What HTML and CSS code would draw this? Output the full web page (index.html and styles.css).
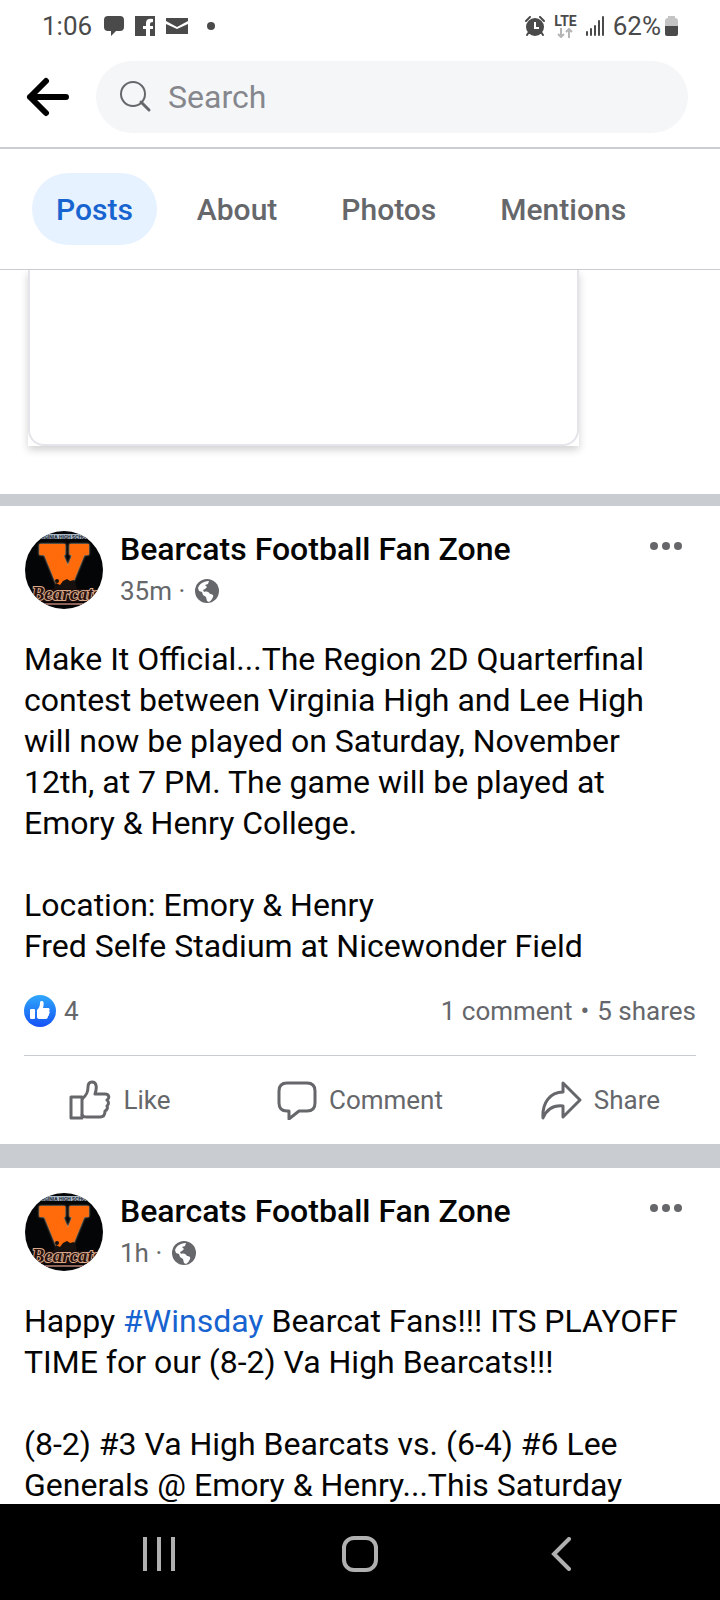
FILE: index.html
```
<!DOCTYPE html>
<html lang="en">
<head>
    <meta charset="UTF-8">
    <meta name="viewport" content="width=device-width, initial-scale=1.0">
    <title>Bearcats Football Fan Zone</title>
    <link rel="stylesheet" href="styles.css">
</head>
<body>
    <svg class="defs" width="0" height="0" aria-hidden="true">
        <defs>
            <clipPath id="round"><circle cx="40" cy="40" r="39"/></clipPath>
            <linearGradient id="blue" x1="0" y1="0" x2="0" y2="1">
                <stop offset="0" stop-color="#2fa8fb"/>
                <stop offset="1" stop-color="#1551f5"/>
            </linearGradient>
            <symbol id="avatar" viewBox="0 0 80 80">
                <g clip-path="url(#round)">
                    <rect width="80" height="80" fill="#040506"/>
                    <rect x="14" y="4" width="52" height="5" fill="#a9b8c6"/>
                    <text x="40" y="9" class="logo-top">VIRGINIA HIGH SCHOOL</text>
                    <text x="40" y="56" class="logo-v">V</text>
                    <path d="M29 59l3-6 4 2 3-4 4-2 3 2 4-1 2 4 1 5z" fill="#16100e"/>
                    <circle cx="33" cy="51" r="2" fill="#16100e"/>
                    <rect x="8" y="59" width="64" height="13" fill="#180b09"/>
                    <text x="42" y="70" class="logo-name">Bearcats</text>
                    <path d="M10 74h60" stroke="#8d6259" stroke-width="2"/>
                </g>
            </symbol>
            <symbol id="globe" viewBox="0 0 24 24">
                <circle cx="12" cy="12" r="12" fill="#65676b"/>
                <path d="M3 9c1-3 3-5 6-6 2-1 4-1 5-1l-1 3-3 1 2 2-2 2-2 1 1 2c3-1 5 0 6 2 2 0 4 1 3 3-1 2-2 4-4 5l-2-1-1-4-3-2-1-3-3-1z" fill="#fff"/>
            </symbol>
            <symbol id="dots" viewBox="0 0 32 10">
                <g fill="#65676b"><circle cx="4" cy="5" r="4"/><circle cx="16" cy="5" r="4"/><circle cx="28" cy="5" r="4"/></g>
            </symbol>
        </defs>
    </svg>

    <div class="status">
        <div class="status-left">
            <span class="clock">1:06</span>
            <svg width="20" height="20" viewBox="0 0 20 20"><path d="M4 0h12q4 0 4 4v7q0 4-4 4h-4l-5 5v-5H4q-4 0-4-4V4q0-4 4-4z"/></svg>
            <svg width="20" height="20" viewBox="0 0 20 20"><path d="M0 0h20v20h-5v-7h3v-3h-3V8q0-2 3-2V3q-7-1-7 4v3H8v3h3v7H0z"/></svg>
            <svg width="22" height="18" viewBox="0 0 22 18"><path d="M0 1h22v3l-11 6L0 4zM0 7l11 5 11-5v10H0z"/></svg>
            <span class="notice"></span>
        </div>
        <div class="status-right">
            <svg width="20" height="20" viewBox="0 0 20 20">
                <path d="M1 5l4-4M19 5l-4-4M4 16l-2 3M16 16l2 3" fill="none" stroke="#4a4a4a" stroke-width="2" stroke-linecap="round"/>
                <circle cx="10" cy="11" r="9"/>
                <path d="M10 6v6h4" fill="none" stroke="#fff" stroke-width="2"/>
            </svg>
            <div class="lte">
                <span>LTE</span>
                <svg width="16" height="10" viewBox="0 0 16 10"><path d="M4 0v9M1 6l3 3 3-3M12 10V1M9 4l3-3 3 3" fill="none" stroke="#b5b5b5" stroke-width="2"/></svg>
            </div>
            <svg width="18" height="20" viewBox="0 0 18 20"><path d="M1 19v-3M5 19v-6M9 19v-9M13 19V5M17 19V1" stroke="#4a4a4a" stroke-width="2" stroke-linecap="round"/></svg>
            <div class="battery">
                <span>62%</span>
                <svg width="14" height="22" viewBox="0 0 14 22"><path d="M3 3V1h7v2q3 0 3 3v5H0V6q0-3 3-3z" fill="#c4c4c4"/><path d="M0 11h13v8q0 2-2 2H2q-2 0-2-2z"/></svg>
            </div>
        </div>
    </div>

    <header class="topbar">
        <button class="back" aria-label="Back">
            <svg width="44" height="40" viewBox="0 0 44 40"><path d="M20 4L4 20l16 16M4 20h36" fill="none" stroke="#000" stroke-width="6" stroke-linecap="round" stroke-linejoin="round"/></svg>
        </button>
        <label class="search">
            <svg width="32" height="32" viewBox="0 0 32 32"><g fill="none" stroke="#65676b"><circle cx="13" cy="13" r="12" stroke-width="2"/><path d="M21 21l8 8" stroke-width="3" stroke-linecap="round"/></g></svg>
            <input type="text" placeholder="Search" aria-label="Search">
        </label>
    </header>

    <nav class="tabs">
        <a href="#" class="tab active">Posts</a>
        <a href="#" class="tab">About</a>
        <a href="#" class="tab">Photos</a>
        <a href="#" class="tab">Mentions</a>
    </nav>

    <main class="feed">
        <section class="previous">
            <div class="preview"><div class="preview-card"></div></div>
        </section>

        <article class="post">
            <div class="post-head">
                <svg class="avatar" width="80" height="80"><use href="#avatar"/></svg>
                <div class="post-info">
                    <h2>Bearcats Football Fan Zone</h2>
                    <div class="meta"><span>35m ·</span><svg width="24" height="24"><use href="#globe"/></svg></div>
                </div>
                <button class="more" aria-label="More"><svg width="32" height="10"><use href="#dots"/></svg></button>
            </div>
            <p>Make It Official...The Region 2D Quarterfinal contest between Virginia High and Lee High will now be played on Saturday, November 12th, at 7 PM. The game will be played at Emory &amp; Henry College.</p>
            <p>Location: Emory &amp; Henry<br>Fred Selfe Stadium at Nicewonder Field</p>
            <div class="counts">
                <svg width="32" height="32" viewBox="0 0 32 32">
                    <circle cx="16" cy="16" r="16" fill="url(#blue)"/>
                    <rect x="6" y="14" width="5" height="10" rx="1" fill="#fff"/>
                    <path d="M13 15c2-2 3-4 3-7 0-2 1-2 2-2 2 0 2 3 1 7h5c2 0 2 2 1 3 1 1 1 2 0 3 0 1 0 2-1 2 0 2-1 3-2 3h-7c-1 0-2-1-2-2z" fill="#fff"/>
                </svg>
                <span>4</span>
                <div class="shares"><span>1 comment</span><span>•</span><span>5 shares</span></div>
            </div>
            <div class="actions">
                <button>
                    <svg width="42" height="40" viewBox="0 0 42 40"><g fill="none" stroke="#65676b" stroke-width="3" stroke-linejoin="round"><path d="M2 17h11v21H2z"/><path d="M13 19c5-4 6-7 6-12 0-3 1-5 4-5 5 0 5 6 3 12h10c4 0 5 4 2 6 2 2 2 4 0 6 1 2 0 4-2 5 0 4-2 6-5 6H18c-3 0-5-1-5-3"/></g></svg>
                    Like
                </button>
                <button>
                    <svg width="40" height="40" viewBox="0 0 40 40"><path d="M10 3h20q8 0 8 8v12q0 8-8 8h-8l-10 8v-8h-2q-8 0-8-8V11q0-8 8-8z" fill="none" stroke="#65676b" stroke-width="3" stroke-linejoin="round"/></svg>
                    Comment
                </button>
                <button>
                    <svg width="42" height="40" viewBox="0 0 42 40"><path d="M23 3l17 17-17 17V26C14 25 7 29 3 38 2 23 10 12 23 12z" fill="none" stroke="#65676b" stroke-width="3" stroke-linejoin="round"/></svg>
                    Share
                </button>
            </div>
        </article>

        <article class="post">
            <div class="post-head">
                <svg class="avatar" width="80" height="80"><use href="#avatar"/></svg>
                <div class="post-info">
                    <h2>Bearcats Football Fan Zone</h2>
                    <div class="meta"><span>1h ·</span><svg width="24" height="24"><use href="#globe"/></svg></div>
                </div>
                <button class="more" aria-label="More"><svg width="32" height="10"><use href="#dots"/></svg></button>
            </div>
            <p>Happy <a href="#">#Winsday</a> Bearcat Fans!!! ITS PLAYOFF TIME for our (8-2) Va High Bearcats!!!</p>
            <p>(8-2) #3 Va High Bearcats vs. (6-4) #6 Lee Generals @ Emory &amp; Henry...This Saturday</p>
        </article>
    </main>

    <footer class="navbar">
        <button aria-label="Recent apps"><svg width="32" height="34" viewBox="0 0 32 34"><path d="M2 0v34M16 0v34M30 0v34" stroke="#b0b0b0" stroke-width="4"/></svg></button>
        <button aria-label="Home"><svg width="36" height="36" viewBox="0 0 36 36"><rect x="2" y="2" width="32" height="32" rx="10" fill="none" stroke="#b0b0b0" stroke-width="4"/></svg></button>
        <button aria-label="Back"><svg width="20" height="34" viewBox="0 0 20 34"><path d="M18 2L3 17l15 15" fill="none" stroke="#b0b0b0" stroke-width="4" stroke-linecap="round"/></svg></button>
    </footer>
</body>
</html>
```
FILE: styles.css
```
* {
    box-sizing: border-box;
}

body {
    display: flex;
    flex-direction: column;
    height: 100vh;
    margin: 0;
    font-family: Roboto, sans-serif;
    color: #050505;
    background-color: #fff;
}

svg {
    display: block;
    flex-shrink: 0;
}

button {
    padding: 0;
    border: 0;
    background: none;
    font-family: inherit;
    cursor: pointer;
}

a {
    color: #1763cf;
    text-decoration: none;
}

.defs {
    position: absolute;
}

/* status bar */
.status {
    display: flex;
    flex-shrink: 0;
    justify-content: space-between;
    height: 61px;
    padding: 0 41px 9px 42px;
    font-size: 26px;
    color: #4a4a4a;
    fill: #4a4a4a;
}

.status-left,
.status-right {
    display: flex;
    align-items: center;
    gap: 11px;
}

.status-right {
    gap: 9px;
}

.clock {
    width: 51px;
}

.notice {
    width: 8px;
    height: 8px;
    margin-left: 8px;
    border-radius: 50%;
    background-color: #4a4a4a;
}

.lte {
    display: flex;
    flex-direction: column;
    align-items: center;
    font-size: 14px;
    line-height: 14px;
    font-weight: 700;
}

.battery {
    display: flex;
    align-items: center;
    gap: 4px;
}

/* search */
.topbar {
    display: flex;
    flex-shrink: 0;
    align-items: center;
    gap: 26px;
    padding: 0 32px 14px 26px;
    border-bottom: 2px solid #c9ccd1;
}

.search {
    display: flex;
    flex: 1;
    align-items: center;
    gap: 16px;
    height: 72px;
    padding: 0 24px;
    border-radius: 36px;
    background-color: #f5f6f8;
}

.search input {
    flex: 1;
    min-width: 0;
    padding: 0;
    border: 0;
    outline: none;
    background: none;
    font-family: inherit;
    font-size: 32px;
}

.search input::placeholder {
    color: #85878c;
}

/* tabs */
.tabs {
    display: flex;
    flex-shrink: 0;
    gap: 16px;
    padding: 24px 32px;
    border-bottom: 1px solid #c9ccd1;
}

.tab {
    height: 72px;
    padding: 0 24px;
    border-radius: 36px;
    font-size: 30px;
    line-height: 74px;
    font-weight: 500;
    color: #65676b;
}

.tab.active {
    color: #1763cf;
    background-color: #e6f2ff;
}

/* feed */
.feed {
    flex: 1;
    min-height: 0;
    overflow: hidden;
}

.previous {
    padding: 0 24px 48px;
    border-bottom: 12px solid #c9ccd1;
}

.preview {
    width: 82%;
    margin-left: 4px;
    background-color: #fff;
    box-shadow: 0 4px 8px rgba(0, 0, 0, 0.18);
}

.preview-card {
    height: 176px;
    border: 2px solid #e4e5ea;
    border-top: 0;
    border-radius: 0 0 16px 16px;
}

.post {
    padding: 24px 24px 0;
    border-bottom: 24px solid #c9ccd1;
}

.post-head {
    display: flex;
    gap: 16px;
    margin-bottom: 29px;
}

.post-info {
    flex: 1;
}

.post-info h2 {
    margin: 0;
    font-size: 32px;
    line-height: 38px;
    font-weight: 500;
    color: #050505;
}

.meta {
    display: flex;
    align-items: center;
    gap: 10px;
    padding-top: 7px;
    font-size: 26px;
    line-height: 32px;
    color: #65676b;
}

.more {
    align-self: flex-start;
    padding: 11px 14px;
}

.post p {
    margin: 0 0 41px;
    font-size: 32px;
    line-height: 41px;
}

.counts {
    display: flex;
    align-items: center;
    gap: 8px;
    margin-top: -13px;
    padding-bottom: 28px;
    border-bottom: 1px solid #c9ccd1;
    font-size: 26px;
    line-height: 32px;
    color: #65676b;
}

.shares {
    display: flex;
    gap: 8px;
    margin-left: auto;
}

.actions {
    display: grid;
    grid-template-columns: repeat(3, 1fr);
    height: 88px;
    margin: 0 -24px;
}

.actions button {
    display: flex;
    align-items: center;
    justify-content: center;
    gap: 12px;
    font-size: 26px;
    color: #65676b;
}

/* avatar logo */
.logo-top {
    font-size: 5px;
    font-weight: 700;
    text-anchor: middle;
    fill: #1b2430;
}

.logo-v {
    font-family: "DejaVu Serif", serif;
    font-size: 52px;
    font-weight: 700;
    text-anchor: middle;
    fill: #ff6b0a;
    stroke: #ff6b0a;
    stroke-width: 8px;
    filter: drop-shadow(0 0 1px #f3dcc0);
}

.logo-name {
    font-family: "Liberation Serif", serif;
    font-size: 19px;
    font-style: italic;
    font-weight: 700;
    text-anchor: middle;
    fill: #2a120c;
    stroke: #d9a98c;
    stroke-width: 2px;
    paint-order: stroke;
}

/* system buttons */
.navbar {
    display: grid;
    grid-template-columns: repeat(3, 1fr);
    flex-shrink: 0;
    align-items: center;
    justify-items: center;
    height: 96px;
    padding: 4px 58px 0;
    background-color: #000;
}
```
